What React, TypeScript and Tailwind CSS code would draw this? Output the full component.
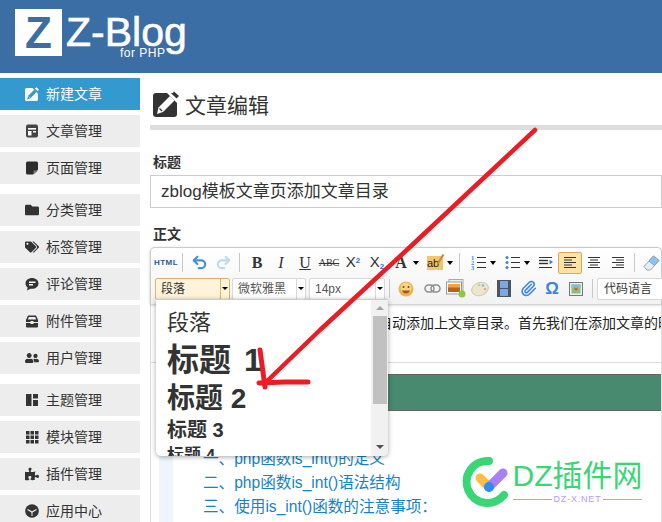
import { Redo2, Undo2, Paperclip } from 'lucide-react';
import { FaFolder, FaPuzzlePiece, FaTags, FaUserFriends } from 'react-icons/fa';

const FONT = "font-['Liberation_Sans','Noto_Sans_CJK_SC',sans-serif]";

function EditIcon({ size, fg, bg }: { size: number; fg: string; bg: string }) {
  return (
    <svg width={size} height={size} viewBox="0 0 26 26">
      <rect x="0" y="2" width="24" height="24" rx="3" fill={fg} />
      <path d="M16.500 1L25.500 8 24 12 14 2z" fill={bg} />
      <path d="M4 23l1.500-6.500L17 5l4.500 4.500L10 21z" fill={bg} />
      <path d="M19 3l2-2.500 5 4.500-2.500 2.500z" fill={fg} />
      <path d="M6.500 17.500l2.500 2.500" stroke={fg} strokeWidth="1.200" />
    </svg>
  );
}

function ArticleIcon() {
  return (
    <svg width="14" height="14" viewBox="0 0 14 14">
      <rect x="1" y="0.500" width="12" height="13" rx="2" fill="#444" />
      <rect x="3" y="4" width="8" height="1.600" fill="#fff" />
      <rect x="3" y="7" width="3.500" height="4.500" fill="#fff" />
      <rect x="8" y="7" width="3" height="1.500" fill="#fff" />
    </svg>
  );
}

function PageIcon() {
  return (
    <svg width="14" height="14" viewBox="0 0 14 14">
      <path d="M1 2a1.500 1.500 0 0 1 1.500-1.500h9A1.500 1.500 0 0 1 13 2v6.500L8 13.500H2.500A1.500 1.500 0 0 1 1 12z" fill="#2d2d2d" />
      <path d="M8.500 13.500V9.500H13z" fill="#777" />
    </svg>
  );
}

function CommentIcon() {
  return (
    <svg width="14" height="14" viewBox="0 0 14 14">
      <path d="M7 1c3.600 0 6.500 2.300 6.500 5.400S10.600 11.800 7 11.800c-.5 0-1 0-1.500-.1L2 13.500l.6-3.100C1.300 9.400.5 8 .5 6.400.5 3.300 3.400 1 7 1z" fill="#333" />
      <rect x="4" y="4.500" width="6.500" height="1.500" fill="#fff" />
      <rect x="4" y="7" width="4" height="1.500" fill="#fff" />
    </svg>
  );
}

function AttachIcon() {
  return (
    <svg width="14" height="14" viewBox="0 0 14 14">
      <path d="M3 1.500h8l2 4.500v6.500a1 1 0 0 1-1 1H2a1 1 0 0 1-1-1V6z" fill="#333" />
      <path d="M3.800 3h6.400l.9 2.500H2.900z" fill="#eee" />
      <rect x="1" y="8" width="12" height="1" fill="#eee" />
      <rect x="5.500" y="7" width="3" height="3" fill="#eee" />
    </svg>
  );
}

function ThemeIcon() {
  return (
    <svg width="14" height="14" viewBox="0 0 14 14" fill="#333">
      <rect x="1" y="1" width="5.500" height="12" />
      <rect x="8" y="1" width="5" height="4.500" />
      <rect x="8" y="7" width="5" height="6" />
    </svg>
  );
}

function ModuleIcon() {
  return (
    <svg width="14" height="14" viewBox="0 0 14 14" fill="#333">
      {[1, 5.500, 10].map((y) =>
        [1, 5.500, 10].map((x) => <rect key={`${x}-${y}`} x={x} y={y} width="3.500" height="3.500" />),
      )}
    </svg>
  );
}

function AppIcon() {
  return (
    <svg width="14" height="14" viewBox="0 0 14 14">
      <circle cx="7" cy="7" r="6.800" fill="#333" />
      <path d="M2.500 5.500L7 8l4.500-2.500" stroke="#eee" strokeWidth="1.200" fill="none" />
      <path d="M7 8v4" stroke="#eee" strokeWidth="1" />
    </svg>
  );
}

const navGroups = [
  [
    { label: '新建文章', icon: <EditIcon size={14} fg="#fff" bg="#3399cf" />, active: true },
    { label: '文章管理', icon: <ArticleIcon /> },
    { label: '页面管理', icon: <PageIcon /> },
  ],
  [
    { label: '分类管理', icon: <FaFolder size={14} color="#333" /> },
    { label: '标签管理', icon: <FaTags size={14} color="#333" /> },
    { label: '评论管理', icon: <CommentIcon /> },
    { label: '附件管理', icon: <AttachIcon /> },
    { label: '用户管理', icon: <FaUserFriends size={14} color="#333" /> },
  ],
  [
    { label: '主题管理', icon: <ThemeIcon /> },
    { label: '模块管理', icon: <ModuleIcon /> },
    { label: '插件管理', icon: <FaPuzzlePiece size={14} color="#333" /> },
    { label: '应用中心', icon: <AppIcon /> },
  ],
];

function Sidebar() {
  return (
    <aside className="w-[140px] shrink-0 pt-[5px] flex flex-col gap-[10px]">
      {navGroups.map((group, i) => (
        <div key={i} className="flex flex-col gap-[5px]">
          {group.map((item) => (
            <div
              key={item.label}
              className={`h-[32px] shrink-0 flex items-center pl-[24px] gap-[7px] text-[14px] ${
                item.active ? 'bg-[#3399cf] text-white' : 'bg-[#ededed] text-[#333]'
              }`}
            >
              <span className="w-[15px] flex justify-center">{item.icon}</span>
              <span>{item.label}</span>
            </div>
          ))}
        </div>
      ))}
    </aside>
  );
}

function Caret() {
  return <span className="w-0 h-0 border-x-[3.500px] border-x-transparent border-t-[4px] border-t-black" />;
}

function Sep() {
  return (
    <div className="w-[9px] h-[19px] flex justify-center shrink-0">
      <div className="w-px h-full bg-[#c8c8c8]" />
    </div>
  );
}

function Lines({ kind }: { kind: 'left' | 'center' | 'right' }) {
  const rows = [
    [1, 13],
    kind === 'left' ? [1, 9] : kind === 'center' ? [3, 11] : [5, 13],
    [1, 13],
    kind === 'left' ? [1, 9] : kind === 'center' ? [3, 11] : [5, 13],
    [1, 13],
  ];
  return (
    <svg width="14" height="13" viewBox="0 0 14 13" stroke="#333" strokeWidth="1">
      {rows.map(([a, b], i) => (
        <line key={i} x1={a} x2={b} y1={1.500 + i * 2.500} y2={1.500 + i * 2.500} />
      ))}
    </svg>
  );
}

function ListIcon({ ordered }: { ordered?: boolean }) {
  return (
    <svg width="15" height="15" viewBox="0 0 15 15">
      {[2.500, 7.500, 12.500].map((y, i) => (
        <g key={y}>
          {ordered ? (
            <text x="0" y={y + 2.500} fontSize="6.500" fontWeight="bold" fill="#3d86d8">{i + 1}</text>
          ) : (
            <circle cx="2" cy={y} r="1.500" fill="#3d86d8" />
          )}
          <line x1="6" x2="15" y1={y} y2={y} stroke="#333" />
        </g>
      ))}
    </svg>
  );
}

function IndentIcon() {
  return (
    <svg width="14" height="13" viewBox="0 0 14 13" stroke="#333">
      <line x1="0" x2="13" y1="1.500" y2="1.500" />
      <line x1="0" x2="9" y1="4.500" y2="4.500" strokeWidth="1.400" />
      <line x1="0" x2="9" y1="7.500" y2="7.500" strokeWidth="1.400" />
      <line x1="0" x2="13" y1="11.500" y2="11.500" />
      <path d="M10.500 3.500L14 6l-3.500 2.500z" fill="#3d86d8" stroke="none" />
    </svg>
  );
}

function EraserIcon() {
  return (
    <svg width="17" height="16" viewBox="0 0 17 16">
      <path d="M10.500 1L16 5.500 7.500 15H4L1 11.500z" fill="#e6edf3" stroke="#9aa7b2" />
      <path d="M10.500 1L16 5.500 11.500 10.500 6 6z" fill="#8ec4ee" stroke="#7da3c4" />
    </svg>
  );
}

function HighlightIcon() {
  return (
    <span className="relative block w-[16px] h-[14px] bg-[#f6c56b] text-[11px] leading-[14px] text-[#222]">
      ab
      <svg className="absolute left-[9px] top-[-2px]" width="9" height="12" viewBox="0 0 9 12">
        <path d="M7.500 0.500L1.500 10" stroke="#c9853a" strokeWidth="2" />
      </svg>
    </span>
  );
}

function Btn({ children, active }: { children: React.ReactNode; active?: boolean }) {
  return (
    <div
      className={`w-[24px] h-[22px] shrink-0 flex items-center justify-center rounded-[2px] ${
        active ? 'bg-[#ffe2a6] border border-[#d9a85f]' : ''
      }`}
    >
      {children}
    </div>
  );
}

function SplitBtn({ children, width }: { children: React.ReactNode; width: string }) {
  return (
    <div className={`${width} h-[22px] shrink-0 flex items-center`}>
      <div className="w-[24px] flex justify-center">{children}</div>
      <Caret />
    </div>
  );
}

function Combo({ label, active, width }: { label: string; active?: boolean; width: string }) {
  return (
    <div
      className={`${width} h-[22px] shrink-0 flex items-center border rounded-[2px] text-[12px] ${
        active ? 'bg-[#fff3d9] border-[#dfb36e] text-[#333]' : 'bg-white border-[#d8d8d8] text-[#555]'
      }`}
    >
      <span className="flex-1 pl-[5px]">{label}</span>
      <span
        className={`w-[9px] h-full flex items-center justify-center border-l ${
          active ? 'border-[#dfb36e]' : 'border-[#d8d8d8]'
        }`}
      >
        <span className="w-0 h-0 border-x-[3px] border-x-transparent border-t-[3.500px] border-t-black" />
      </span>
    </div>
  );
}

function Emoji() {
  return (
    <svg width="16" height="16" viewBox="0 0 16 16">
      <circle cx="8" cy="8" r="7.500" fill="#f3b04c" />
      <circle cx="8" cy="7" r="5.500" fill="#fbd383" />
      <circle cx="5.500" cy="6" r="1" fill="#7a4a12" />
      <circle cx="10.500" cy="6" r="1" fill="#7a4a12" />
      <path d="M4 9.500h8c-.5 2-2 3-4 3s-3.500-1-4-3z" fill="#a3561a" />
    </svg>
  );
}

function LinkIcon() {
  return (
    <svg width="17" height="9" viewBox="0 0 17 9" fill="none" stroke="#8d8d8d" strokeWidth="1.500">
      <rect x="1" y="1" width="9" height="7" rx="3.500" />
      <rect x="7" y="1" width="9" height="7" rx="3.500" />
    </svg>
  );
}

function PhotoIcon() {
  return (
    <svg width="20" height="19" viewBox="0 0 20 19">
      <rect x="3" y="0.500" width="14" height="11" fill="#eee" stroke="#aaa" />
      <rect x="0.500" y="3" width="15" height="12" fill="#fff" stroke="#999" />
      <rect x="2" y="5" width="12" height="8" fill="#b7651c" />
      <rect x="2" y="5" width="12" height="3.500" fill="#f0a63c" />
      <circle cx="16" cy="15" r="3.500" fill="#8fc93a" />
    </svg>
  );
}

function PaletteIcon() {
  return (
    <svg width="18" height="16" viewBox="0 0 18 16">
      <ellipse cx="9" cy="8" rx="8.500" ry="6.500" fill="#ece6cf" stroke="#cfc8a8" transform="rotate(-20 9 8)" />
      <circle cx="12" cy="4.500" r="1.300" fill="#8db7e0" />
      <circle cx="14" cy="8" r="1.300" fill="#e3a3a3" />
      <circle cx="8" cy="4" r="1.300" fill="#b8d48a" />
    </svg>
  );
}

function FilmIcon() {
  return (
    <svg width="14" height="17" viewBox="0 0 14 17">
      <rect width="14" height="17" fill="#4a5560" />
      <rect x="3" y="1" width="8" height="7" fill="#7ea6e0" />
      <rect x="3" y="9" width="8" height="7" fill="#7ea6e0" />
    </svg>
  );
}

function MapIcon() {
  return (
    <svg width="14" height="14" viewBox="0 0 14 14">
      <rect x="0.500" y="0.500" width="13" height="13" fill="#eee" stroke="#777" />
      <rect x="2.500" y="2.500" width="9" height="9" fill="#8cc07a" />
      <rect x="2.500" y="2.500" width="9" height="3" fill="#8cb8dd" />
      <circle cx="7" cy="7" r="1.500" fill="#d9524a" />
    </svg>
  );
}

function Toolbar() {
  return (
    <div className="h-[57px] border-t border-x border-[#ccc] rounded-t-[5px] bg-gradient-to-b from-white to-[#f2f2f2] shadow-[0_1px_3px_rgba(0,0,0,0.25)] pl-[3px] pt-[3px] relative">
      <div className="flex items-center h-[23px] font-['Liberation_Serif',serif] text-[#333]">
        <Btn>
          <span className="font-['Liberation_Sans',sans-serif] text-[8px] font-bold tracking-[0.5px] text-[#2a5d9a]">HTML</span>
        </Btn>
        <Sep />
        <Btn><Undo2 size={17} strokeWidth={3} color="#4a90d4" /></Btn>
        <Btn><Redo2 size={17} strokeWidth={3} color="#bddaf0" /></Btn>
        <Sep />
        <div className="w-px shrink-0" />
        <Btn><span className="text-[16px] font-bold">B</span></Btn>
        <Btn><span className="text-[16px] italic">I</span></Btn>
        <Btn><span className="text-[16px] underline">U</span></Btn>
        <Btn><span className="text-[10px] line-through">ABC</span></Btn>
        <Btn><span className="font-['Liberation_Sans',sans-serif] text-[15px]">X<sup className="text-[8px] text-[#2f6fd0] font-bold">2</sup></span></Btn>
        <Btn><span className="font-['Liberation_Sans',sans-serif] text-[15px]">X<sub className="text-[8px] text-[#2f6fd0] font-bold">2</sub></span></Btn>
        <SplitBtn width="w-[34px]"><span className="text-[16px] font-bold">A</span></SplitBtn>
        <SplitBtn width="w-[32px]"><span className="font-['Liberation_Sans',sans-serif]"><HighlightIcon /></span></SplitBtn>
        <Sep />
        <div className="w-[2px] shrink-0" />
        <SplitBtn width="w-[34px]"><ListIcon ordered /></SplitBtn>
        <SplitBtn width="w-[34px]"><ListIcon /></SplitBtn>
        <Btn><IndentIcon /></Btn>
        <Btn active><Lines kind="left" /></Btn>
        <Btn><Lines kind="center" /></Btn>
        <Btn><Lines kind="right" /></Btn>
        <Sep />
        <Btn><EraserIcon /></Btn>
      </div>
      <div className="flex items-center h-[23px] mt-[3px]">
        <div className="w-px shrink-0" />
        <Combo label="段落" active width="w-[75px]" />
        <div className="w-[2px] shrink-0" />
        <Combo label="微软雅黑" width="w-[74px]" />
        <div className="w-[3px] shrink-0" />
        <Combo label="14px" width="w-[76px]" />
        <Sep />
        <Btn><Emoji /></Btn>
        <div className="w-[2px] shrink-0" />
        <Btn><LinkIcon /></Btn>
        <Btn><PhotoIcon /></Btn>
        <Btn><PaletteIcon /></Btn>
        <Btn><FilmIcon /></Btn>
        <Btn><Paperclip size={17} strokeWidth={2.2} color="#3d86d8" /></Btn>
        <Btn><span className="text-[17px] font-bold text-[#3d86d8]">Ω</span></Btn>
        <Btn><MapIcon /></Btn>
        <Sep />
        <div className="w-[90px] h-[22px] shrink-0 bg-white border border-[#d8d8d8] rounded-[2px] pl-[6px] text-[12px] leading-[20px] text-[#333]">
          代码语言
        </div>
      </div>
    </div>
  );
}

function FormatMenu() {
  return (
    <div className="absolute left-[6px] top-[52px] w-[232px] h-[157px] z-10 bg-white border-t border-[#ccc] rounded-b-[5px] shadow-[0_1px_5px_rgba(0,0,0,0.35)] overflow-hidden flex text-[#333]">
      <div className="flex-1 pl-[11px] pt-[8px] min-w-0">
        <div className="text-[22px] leading-[30px]">段落</div>
        <div className="text-[32px] leading-[44px] font-bold [word-spacing:4px]">标题 1</div>
        <div className="text-[28px] leading-[34px] font-bold">标题 2</div>
        <div className="text-[20px] leading-[28px] font-bold">标题 3</div>
        <div className="text-[17px] leading-[24px] font-bold">标题 4</div>
      </div>
      <div className="w-[17px] bg-[#f1f1f1] flex flex-col items-center shrink-0">
        <span className="mt-[6px] w-0 h-0 border-x-[4px] border-x-transparent border-b-[4px] border-b-[#a3a3a3]" />
        <div className="mt-[6px] w-[14px] h-[88px] bg-[#c1c1c1]" />
        <span className="mt-[41px] w-0 h-0 border-x-[4px] border-x-transparent border-t-[4px] border-t-[#505050]" />
      </div>
    </div>
  );
}

function EditorBody() {
  return (
    <div className="h-[300px] border-x border-[#ddd] text-[14px] text-[#222]">
      <div className="pl-[31px] pt-[9px] h-[59px] border-b border-[#ddd] whitespace-nowrap overflow-hidden leading-[20px]">
        本文介绍如何在文章页面中实现自动添加上文章目录。首先我们在添加文章的时候
      </div>
      <div className="mt-[11px] ml-[8px] h-[37px] bg-[#478a70] border-t border-[#666] border-b" />
      <div className="ml-[8px] mt-[29px] w-[14px] h-[110px] bg-[#eef5fd] absolute" />
      <div className="pl-[52px] pt-[36px] text-[15.6px] leading-[24px] text-[#1583cb] whitespace-nowrap">
        <div>一、php函数is_int()的定义</div>
        <div>二、php函数is_int()语法结构</div>
        <div>三、使用is_int()函数的注意事项：</div>
      </div>
    </div>
  );
}

function Watermark() {
  return (
    <div className="absolute left-[462px] top-[456px] flex items-start gap-[3px]">
      <svg width="48" height="52" viewBox="0 0 48 52">
        <path d="M27 5A21 21 0 1 0 42 39" fill="none" stroke="#3ad675" strokeWidth="8" strokeLinecap="round" />
        <path d="M18 22l9 9" stroke="#fdbd46" strokeWidth="9" strokeLinecap="round" />
        <path d="M27 31l14-14" stroke="#a97ffb" strokeWidth="9" strokeLinecap="round" />
        <circle cx="27" cy="31" r="5" fill="#2c8cf8" />
      </svg>
      <div className="flex flex-col items-center w-[129px] pt-[2px]">
        <div className="text-[30px] leading-[36px] text-[#3ad675] whitespace-nowrap">DZ插件网</div>
        <div className="flex items-center gap-[2px] w-full text-[9px] leading-[10px] text-[#b79cf5] tracking-[0.8px]">
          <div className="flex-1 h-px bg-[#b79cf5]" />
          <span>DZ-X.NET</span>
          <div className="flex-1 h-px bg-[#b79cf5]" />
        </div>
      </div>
    </div>
  );
}

function RedArrow() {
  return (
    <svg className="absolute inset-0 z-20 pointer-events-none" width="662" height="522" viewBox="0 0 662 522" fill="none" stroke="#ec1c24" strokeWidth="4.500" strokeLinecap="round" strokeLinejoin="round">
      <path d="M535 130L410 247L320 330L264 384" />
      <path d="M260 350L265 387" strokeWidth="5" />
      <path d="M259 383L285 382L308 382" strokeWidth="5" />
    </svg>
  );
}

export default function App() {
  return (
    <div className={`relative w-[662px] h-[522px] overflow-hidden bg-white flex flex-col ${FONT}`}>
      <header className="h-[73px] shrink-0 bg-[#3a6ea5] flex items-start pl-[15px] pt-[9px] text-white">
        <div className="w-[47px] h-[47px] bg-white flex items-center justify-center text-[44px] leading-none font-black text-[#3a6ea5]">
          Z
        </div>
        <div className="relative ml-[4px] text-[41px] leading-[46px] [-webkit-text-stroke:0.6px_white]">
          Z-Blog
          <span className="absolute left-[54px] top-[37px] text-[12px] leading-[14px] tracking-[0.5px] [-webkit-text-stroke:0]">for PHP</span>
        </div>
      </header>
      <div className="flex flex-1 min-h-0">
        <Sidebar />
        <main className="flex-1 min-w-0 ml-[10px] relative">
          <div className="h-[52px] pl-[3px] pt-[18px] flex items-start gap-[6px]">
            <EditIcon size={26} fg="#333" bg="#fff" />
            <h1 className="text-[21px] leading-[30px] text-[#333]">文章编辑</h1>
          </div>
          <div className="h-[5px] bg-[#dddddd]" />
          <label className="block mt-[24px] pl-[3px] text-[14px] leading-[17px] font-bold text-[#333]">标题</label>
          <div className="mt-[4px] h-[33px] border border-[#ccc] pl-[10px] text-[17px] leading-[31px] text-[#333] whitespace-nowrap">
            zblog模板文章页添加文章目录
          </div>
          <label className="block mt-[18px] pl-[3px] text-[14px] leading-[17px] font-bold text-[#333]">正文</label>
          <div className="mt-[4px] relative">
            <Toolbar />
            <EditorBody />
            <FormatMenu />
          </div>
        </main>
      </div>
      <Watermark />
      <RedArrow />
    </div>
  );
}
